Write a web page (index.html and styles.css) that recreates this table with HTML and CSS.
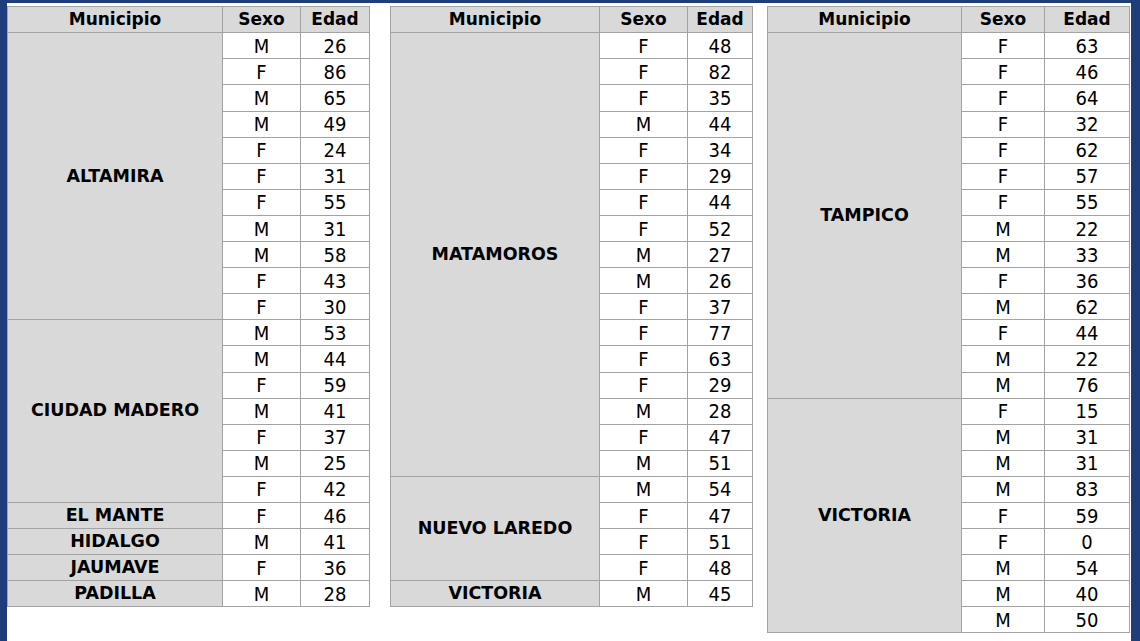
FILE: index.html
```html
<!DOCTYPE html>
<html lang="es">
<head>
<meta charset="utf-8">
<title>Municipios</title>
<link rel="stylesheet" href="styles.css">
</head>
<body>
<div class="panel">
  <table class="grid t1">
    <colgroup><col class="c-mun"><col class="c-sex"><col class="c-age"></colgroup>
    <thead><tr><th>Municipio</th><th>Sexo</th><th>Edad</th></tr></thead>
    <tbody>
      <tr><td class="mun" rowspan="11">ALTAMIRA</td><td>M</td><td>26</td></tr>
      <tr><td>F</td><td>86</td></tr>
      <tr><td>M</td><td>65</td></tr>
      <tr><td>M</td><td>49</td></tr>
      <tr><td>F</td><td>24</td></tr>
      <tr><td>F</td><td>31</td></tr>
      <tr><td>F</td><td>55</td></tr>
      <tr><td>M</td><td>31</td></tr>
      <tr><td>M</td><td>58</td></tr>
      <tr><td>F</td><td>43</td></tr>
      <tr><td>F</td><td>30</td></tr>
      <tr><td class="mun" rowspan="7">CIUDAD MADERO</td><td>M</td><td>53</td></tr>
      <tr><td>M</td><td>44</td></tr>
      <tr><td>F</td><td>59</td></tr>
      <tr><td>M</td><td>41</td></tr>
      <tr><td>F</td><td>37</td></tr>
      <tr><td>M</td><td>25</td></tr>
      <tr><td>F</td><td>42</td></tr>
      <tr><td class="mun">EL MANTE</td><td>F</td><td>46</td></tr>
      <tr><td class="mun">HIDALGO</td><td>M</td><td>41</td></tr>
      <tr><td class="mun">JAUMAVE</td><td>F</td><td>36</td></tr>
      <tr><td class="mun">PADILLA</td><td>M</td><td>28</td></tr>
    </tbody>
  </table>

  <table class="grid t2">
    <colgroup><col class="c-mun"><col class="c-sex"><col class="c-age"></colgroup>
    <thead><tr><th>Municipio</th><th>Sexo</th><th>Edad</th></tr></thead>
    <tbody>
      <tr><td class="mun" rowspan="17">MATAMOROS</td><td>F</td><td>48</td></tr>
      <tr><td>F</td><td>82</td></tr>
      <tr><td>F</td><td>35</td></tr>
      <tr><td>M</td><td>44</td></tr>
      <tr><td>F</td><td>34</td></tr>
      <tr><td>F</td><td>29</td></tr>
      <tr><td>F</td><td>44</td></tr>
      <tr><td>F</td><td>52</td></tr>
      <tr><td>M</td><td>27</td></tr>
      <tr><td>M</td><td>26</td></tr>
      <tr><td>F</td><td>37</td></tr>
      <tr><td>F</td><td>77</td></tr>
      <tr><td>F</td><td>63</td></tr>
      <tr><td>F</td><td>29</td></tr>
      <tr><td>M</td><td>28</td></tr>
      <tr><td>F</td><td>47</td></tr>
      <tr><td>M</td><td>51</td></tr>
      <tr><td class="mun" rowspan="4">NUEVO LAREDO</td><td>M</td><td>54</td></tr>
      <tr><td>F</td><td>47</td></tr>
      <tr><td>F</td><td>51</td></tr>
      <tr><td>F</td><td>48</td></tr>
      <tr><td class="mun">VICTORIA</td><td>M</td><td>45</td></tr>
    </tbody>
  </table>

  <table class="grid t3">
    <colgroup><col class="c-mun"><col class="c-sex"><col class="c-age"></colgroup>
    <thead><tr><th>Municipio</th><th>Sexo</th><th>Edad</th></tr></thead>
    <tbody>
      <tr><td class="mun" rowspan="14">TAMPICO</td><td>F</td><td>63</td></tr>
      <tr><td>F</td><td>46</td></tr>
      <tr><td>F</td><td>64</td></tr>
      <tr><td>F</td><td>32</td></tr>
      <tr><td>F</td><td>62</td></tr>
      <tr><td>F</td><td>57</td></tr>
      <tr><td>F</td><td>55</td></tr>
      <tr><td>M</td><td>22</td></tr>
      <tr><td>M</td><td>33</td></tr>
      <tr><td>F</td><td>36</td></tr>
      <tr><td>M</td><td>62</td></tr>
      <tr><td>F</td><td>44</td></tr>
      <tr><td>M</td><td>22</td></tr>
      <tr><td>M</td><td>76</td></tr>
      <tr><td class="mun" rowspan="9">VICTORIA</td><td>F</td><td>15</td></tr>
      <tr><td>M</td><td>31</td></tr>
      <tr><td>M</td><td>31</td></tr>
      <tr><td>M</td><td>83</td></tr>
      <tr><td>F</td><td>59</td></tr>
      <tr><td>F</td><td>0</td></tr>
      <tr><td>M</td><td>54</td></tr>
      <tr><td>M</td><td>40</td></tr>
      <tr><td>M</td><td>50</td></tr>
    </tbody>
  </table>
</div>
</body>
</html>
```

FILE: styles.css
```css
html, body {
  margin: 0;
  padding: 0;
}
body {
  background: #1f3d7b;
  width: 1140px;
  height: 641px;
  overflow: hidden;
}
.panel {
  margin: 3px 9px 0 7px;
  height: 638px;
  background: #ffffff;
  display: flex;
  align-items: flex-start;
  padding-top: 3px;
  box-sizing: border-box;
}
.grid {
  border-collapse: collapse;
  table-layout: fixed;
  width: 362px;
  font-family: "DejaVu Sans Condensed", "DejaVu Sans", sans-serif;
  color: #000;
}
.t2 { margin-left: 20px; }
.t3 { margin-left: 14px; }

.grid th, .grid td {
  border: 1px solid #a3a3a3;
  padding: 0;
  height: 25.1px;
  text-align: center;
  vertical-align: middle;
  line-height: 1;
}
.grid th {
  background: #d9d9d9;
  font-family: "DejaVu Sans", sans-serif;
  font-weight: bold;
  font-size: 17px;
  height: 25.3px;
}
.grid td {
  font-size: 20px;
  background: #ffffff;
}
.grid td.mun {
  background: #d9d9d9;
  font-family: "DejaVu Sans", sans-serif;
  font-weight: bold;
  font-size: 17.5px;
}

.t1 .c-mun { width: 215px; }
.t1 .c-sex { width: 78px; }
.t1 .c-age { width: 69px; }

.t2 .c-mun { width: 209px; }
.t2 .c-sex { width: 88px; }
.t2 .c-age { width: 65px; }

.t3 .c-mun { width: 194px; }
.t3 .c-sex { width: 83px; }
.t3 .c-age { width: 85px; }
```
